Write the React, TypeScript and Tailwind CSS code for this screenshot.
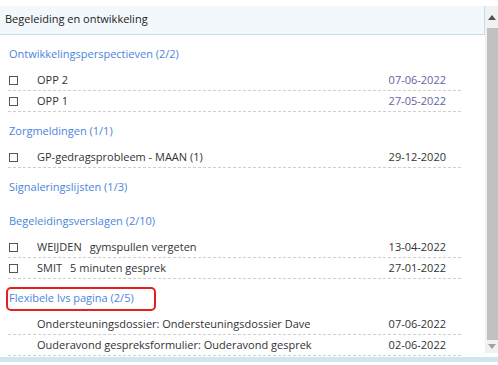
import React from "react"

interface Item {
  check?: boolean
  name?: string
  text: string
  date: string
  visited?: boolean
}

interface Section {
  title: string
  items: Item[]
  marked?: boolean
}

const sections: Section[] = [
  {
    title: "Ontwikkelingsperspectieven (2/2)",
    items: [
      { check: true, text: "OPP 2", date: "07-06-2022", visited: true },
      { check: true, text: "OPP 1", date: "27-05-2022", visited: true },
    ],
  },
  {
    title: "Zorgmeldingen (1/1)",
    items: [{ check: true, text: "GP-gedragsprobleem - MAAN (1)", date: "29-12-2020" }],
  },
  { title: "Signaleringslijsten (1/3)", items: [] },
  {
    title: "Begeleidingsverslagen (2/10)",
    items: [
      { check: true, name: "WEIJDEN", text: "gymspullen vergeten", date: "13-04-2022" },
      { check: true, name: "SMIT", text: "5 minuten gesprek", date: "27-01-2022" },
    ],
  },
  {
    title: "Flexibele lvs pagina (2/5)",
    marked: true,
    items: [
      { text: "Ondersteuningsdossier: Ondersteuningsdossier Dave", date: "07-06-2022" },
      { text: "Ouderavond gespreksformulier: Ouderavond gesprek", date: "02-06-2022" },
    ],
  },
]

function Row({ item }: { item: Item }) {
  return (
    <div className="ml-[8px] mr-[24px] h-[21px] flex items-center border-b border-dashed border-[#cfcfcf] pr-[15px] text-[#333]">
      <div className="w-[29px] shrink-0">
        {item.check && <div className="w-[9px] h-[9px] border border-[#555] ml-[1px]" />}
      </div>
      <div className="flex-1 truncate">
        {item.name && <span className="mr-[8px]">{item.name}</span>}
        {item.text}
      </div>
      <span className={item.visited ? "text-[#63639f]" : "text-[#333]"}>{item.date}</span>
    </div>
  )
}

export default function App() {
  return (
    <div className="w-[498px] h-[365px] bg-white text-[11px] leading-4 overflow-hidden" style={{ fontFamily: '"Open Sans", "Liberation Sans", sans-serif' }}>
      <div className="h-[6px]" />
      <div className="flex h-[351px]">
        {/* panel */}
        <div className="flex-1 overflow-hidden">
          <div className="h-[29px] bg-[#f2f8fb] border-b border-r border-[#bfdff1] flex items-center pl-[5px] pb-[2px] text-[#222]">
            Begeleiding en ontwikkeling
          </div>
          {sections.map((s) => (
            <div key={s.title}>
              <div className={`${s.items.length ? "h-[35px]" : "h-[34px]"} pt-[11px] pl-[9px] text-[#4a85dc] relative`}>
                {s.title}
                {s.marked && (
                  <div className="absolute left-[6px] top-[8px] w-[150px] h-[24px] border-2 border-[#e51e1e] rounded-[5px]" />
                )}
              </div>
              {s.items.map((it) => (
                <Row key={it.text} item={it} />
              ))}
            </div>
          ))}
        </div>
        {/* scrollbar */}
        <div className="w-[13px] h-[347px] bg-[#f1f1f1] flex flex-col items-center">
          <div className="h-[22px] flex items-center justify-center">
            <svg width="8" height="5" viewBox="0 0 8 5">
              <path d="M0 5 L4 0 L8 5 Z" fill="#505050" />
            </svg>
          </div>
          <div className="w-[11px] ml-[2px] h-[312px] bg-[#c1c1c1]" />
          <div className="flex-1 flex items-center justify-center">
            <svg width="8" height="5" viewBox="0 0 8 5">
              <path d="M0 0 L8 0 L4 5 Z" fill="#a3a3a3" />
            </svg>
          </div>
        </div>
      </div>
      <div className="h-[5px] bg-[#cfe5f2]" />
    </div>
  )
}
